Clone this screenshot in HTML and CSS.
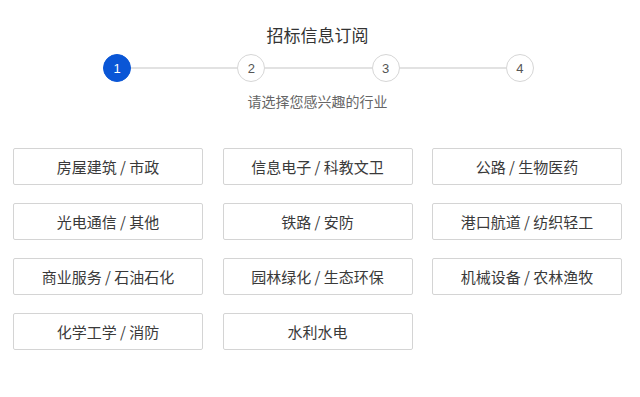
FILE: index.html
```html
<!DOCTYPE html>
<html lang="zh-CN">
<head>
    <meta charset="UTF-8">
    <meta name="viewport" content="width=device-width, initial-scale=1.0">
    <title>招标信息订阅</title>
    <link rel="stylesheet" href="styles.css">
</head>
<body>
    <div class="page">
        <h1 class="title">招标信息订阅</h1>
        <div class="steps">
            <span class="step active">1</span>
            <span class="line"></span>
            <span class="step">2</span>
            <span class="line"></span>
            <span class="step">3</span>
            <span class="line"></span>
            <span class="step">4</span>
        </div>
        <p class="hint">请选择您感兴趣的行业</p>
        <div class="industries">
            <button class="item">房屋建筑 / 市政</button>
            <button class="item">信息电子 / 科教文卫</button>
            <button class="item">公路 / 生物医药</button>
            <button class="item">光电通信 / 其他</button>
            <button class="item">铁路 / 安防</button>
            <button class="item">港口航道 / 纺织轻工</button>
            <button class="item">商业服务 / 石油石化</button>
            <button class="item">园林绿化 / 生态环保</button>
            <button class="item">机械设备 / 农林渔牧</button>
            <button class="item">化学工学 / 消防</button>
            <button class="item">水利水电</button>
        </div>
    </div>
</body>
</html>
```

FILE: styles.css
```css
body { margin: 0; background: #fff; font-family: "Microsoft YaHei", "Noto Sans CJK SC", "Liberation Sans", sans-serif; color: #333; }
.page { width: 609px; margin-left: 13px; padding-top: 24px; }
.title { margin: 0; font-size: 17px; font-weight: normal; text-align: center; line-height: 22px; color: #333; }
.steps { display: flex; align-items: center; width: 431px; margin: 8px 0 0 90px; }
.step { width: 26px; height: 26px; border: 1px solid #d6d6d6; border-radius: 50%; display: flex; align-items: center; justify-content: center; font-family: "Liberation Sans", Arial, sans-serif; font-size: 13px; color: #555; background: #fff; flex: none; }
.step.active { background: #0a56d6; border-color: #0a56d6; color: #fff; }
.line { flex: 1; height: 2px; background: #e2e2e2; }
.hint { margin: 10px 0 0; font-size: 14px; line-height: 18px; text-align: center; color: #666; }
.industries { display: grid; grid-template-columns: repeat(3, 190px); column-gap: 19.5px; row-gap: 18px; margin-top: 38px; }
.item { height: 37px; padding: 0; background: #fff; border: 1px solid #d4d4d4; border-radius: 2px; font-family: inherit; font-size: 15px; color: #3a3a3a; cursor: pointer; }
.item:hover { border-color: #0a56d6; color: #0a56d6; }
```
